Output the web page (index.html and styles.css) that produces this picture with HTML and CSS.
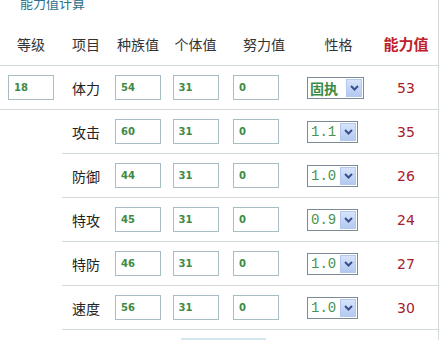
FILE: index.html
```html
<!DOCTYPE html>
<html lang="zh-CN">
<head>
    <meta charset="UTF-8">
    <title>能力值计算</title>
    <link rel="stylesheet" href="styles.css">
</head>
<body>
    <div class="calc">
        <h2 class="calc-title">能力值计算</h2>

        <table class="stat-table">
            <colgroup>
                <col class="c-level">
                <col class="c-name">
                <col class="c-base">
                <col class="c-iv">
                <col class="c-ev">
                <col class="c-nature">
                <col class="c-result">
            </colgroup>
            <thead>
                <tr>
                    <th>等级</th>
                    <th>项目</th>
                    <th>种族值</th>
                    <th>个体值</th>
                    <th>努力值</th>
                    <th>性格</th>
                    <th class="result-head">能力值</th>
                </tr>
            </thead>
            <tbody>
                <tr class="first">
                    <td class="level"><input type="text" value="18"></td>
                    <td class="name">体力</td>
                    <td class="num"><input type="text" value="54"></td>
                    <td class="num"><input type="text" value="31"></td>
                    <td class="ev"><input type="text" value="0"></td>
                    <td class="nature">
                        <span class="pick wide">
                            <select class="cjk"><option>固执</option></select>
                            <i class="arrow"><svg width="9" height="6" viewBox="0 0 9 6"><path d="M1 1l3.5 3.5L8 1" fill="none" stroke="#3a4f8c" stroke-width="2"/></svg></i>
                        </span>
                    </td>
                    <td class="result">53</td>
                </tr>
                <tr>
                    <td class="blank"></td>
                    <td class="name">攻击</td>
                    <td class="num"><input type="text" value="60"></td>
                    <td class="num"><input type="text" value="31"></td>
                    <td class="ev"><input type="text" value="0"></td>
                    <td class="nature">
                        <span class="pick">
                            <select><option>1.1</option></select>
                            <i class="arrow"><svg width="9" height="6" viewBox="0 0 9 6"><path d="M1 1l3.5 3.5L8 1" fill="none" stroke="#3a4f8c" stroke-width="2"/></svg></i>
                        </span>
                    </td>
                    <td class="result">35</td>
                </tr>
                <tr>
                    <td class="blank"></td>
                    <td class="name">防御</td>
                    <td class="num"><input type="text" value="44"></td>
                    <td class="num"><input type="text" value="31"></td>
                    <td class="ev"><input type="text" value="0"></td>
                    <td class="nature">
                        <span class="pick">
                            <select><option>1.0</option></select>
                            <i class="arrow"><svg width="9" height="6" viewBox="0 0 9 6"><path d="M1 1l3.5 3.5L8 1" fill="none" stroke="#3a4f8c" stroke-width="2"/></svg></i>
                        </span>
                    </td>
                    <td class="result">26</td>
                </tr>
                <tr>
                    <td class="blank"></td>
                    <td class="name">特攻</td>
                    <td class="num"><input type="text" value="45"></td>
                    <td class="num"><input type="text" value="31"></td>
                    <td class="ev"><input type="text" value="0"></td>
                    <td class="nature">
                        <span class="pick">
                            <select><option>0.9</option></select>
                            <i class="arrow"><svg width="9" height="6" viewBox="0 0 9 6"><path d="M1 1l3.5 3.5L8 1" fill="none" stroke="#3a4f8c" stroke-width="2"/></svg></i>
                        </span>
                    </td>
                    <td class="result">24</td>
                </tr>
                <tr>
                    <td class="blank"></td>
                    <td class="name">特防</td>
                    <td class="num"><input type="text" value="46"></td>
                    <td class="num"><input type="text" value="31"></td>
                    <td class="ev"><input type="text" value="0"></td>
                    <td class="nature">
                        <span class="pick">
                            <select><option>1.0</option></select>
                            <i class="arrow"><svg width="9" height="6" viewBox="0 0 9 6"><path d="M1 1l3.5 3.5L8 1" fill="none" stroke="#3a4f8c" stroke-width="2"/></svg></i>
                        </span>
                    </td>
                    <td class="result">27</td>
                </tr>
                <tr>
                    <td class="blank"></td>
                    <td class="name">速度</td>
                    <td class="num"><input type="text" value="56"></td>
                    <td class="num"><input type="text" value="31"></td>
                    <td class="ev"><input type="text" value="0"></td>
                    <td class="nature">
                        <span class="pick">
                            <select><option>1.0</option></select>
                            <i class="arrow"><svg width="9" height="6" viewBox="0 0 9 6"><path d="M1 1l3.5 3.5L8 1" fill="none" stroke="#3a4f8c" stroke-width="2"/></svg></i>
                        </span>
                    </td>
                    <td class="result">30</td>
                </tr>
            </tbody>
        </table>

        <div class="calc-foot">
            <button type="button" class="calc-btn">计算</button>
        </div>
    </div>
</body>
</html>
```

FILE: styles.css
```css
body {
    margin: 0;
    background: #fff;
    font-family: "Noto Sans CJK SC", sans-serif;
    overflow: hidden;
}
.calc {
    width: 438px;
    border-right: 1px solid #d3dadd;
    min-height: 340px;
}
.calc-title {
    margin: -5px 0 0 20px;
    height: 27px;
    font-size: 13px;
    font-weight: normal;
    line-height: 16px;
    color: #2b6f8c;
}
.stat-table {
    width: 438px;
    table-layout: fixed;
    border-collapse: collapse;
}
.c-level { width: 62px; }
.c-name { width: 48px; }
.c-base { width: 56px; }
.c-iv { width: 59px; }
.c-ev { width: 78px; }
.c-nature { width: 71px; }
.c-result { width: 64px; }
th {
    height: 43px;
    padding: 0;
    font-size: 14px;
    font-weight: normal;
    color: #333;
    text-align: center;
    border-bottom: 1px solid #d3dadd;
}
th.result-head {
    font-weight: bold;
    font-size: 15px;
    color: #c0202a;
}
td {
    height: 43px;
    padding: 0;
    text-align: center;
    border-bottom: 1px solid #d3dadd;
}
td.blank {
    border-bottom: none;
}
td.name {
    font-size: 14px;
    color: #222;
}
td.ev, td.nature {
    text-align: left;
}
td.ev input {
    margin-left: 8px;
}
td.nature .pick {
    margin-left: 4px;
}
input {
    box-sizing: border-box;
    width: 46px;
    height: 25px;
    margin: 0 0 2px;
    padding: 0 5px;
    border: 1px solid #a8bcc4;
    font-family: "DejaVu Sans", sans-serif;
    font-size: 10px;
    font-weight: bold;
    color: #3d8a44;
    vertical-align: middle;
}
.pick {
    position: relative;
    display: inline-block;
    vertical-align: middle;
    margin-bottom: 2px;
}
.pick select {
    appearance: none;
    -webkit-appearance: none;
    box-sizing: border-box;
    width: 51px;
    height: 22px;
    margin: 0;
    padding: 0 0 0 3px;
    border: 1px solid #7b8a96;
    border-radius: 0;
    background: #fff;
    font-family: "Liberation Mono", monospace;
    font-size: 14px;
    color: #4a9350;
    display: block;
}
.pick.wide select {
    width: 57px;
}
.pick select.cjk {
    font-family: "Noto Sans CJK SC", sans-serif;
    font-weight: bold;
    font-size: 14px;
    padding-left: 2px;
    line-height: 18px;
    color: #3d8a44;
}
/* blue dropdown button drawn over the select's right edge */
.arrow {
    position: absolute;
    top: 2px;
    right: 2px;
    width: 16px;
    height: 18px;
    box-sizing: border-box;
    border: 1px solid #b4c8ee;
    background: linear-gradient(#d6e3fb, #b3c9f1);
    display: flex;
    align-items: center;
    justify-content: center;
    pointer-events: none;
}
td.result {
    font-family: "DejaVu Sans", sans-serif;
    font-size: 14px;
    color: #a8202a;
}
.calc-foot {
    padding: 6px 0 0 181px;
}
.calc-btn {
    width: 85px;
    height: 24px;
    border: none;
    background: #d3e6f0;
    font-size: 12px;
    line-height: 24px;
    color: #333;
}
```
